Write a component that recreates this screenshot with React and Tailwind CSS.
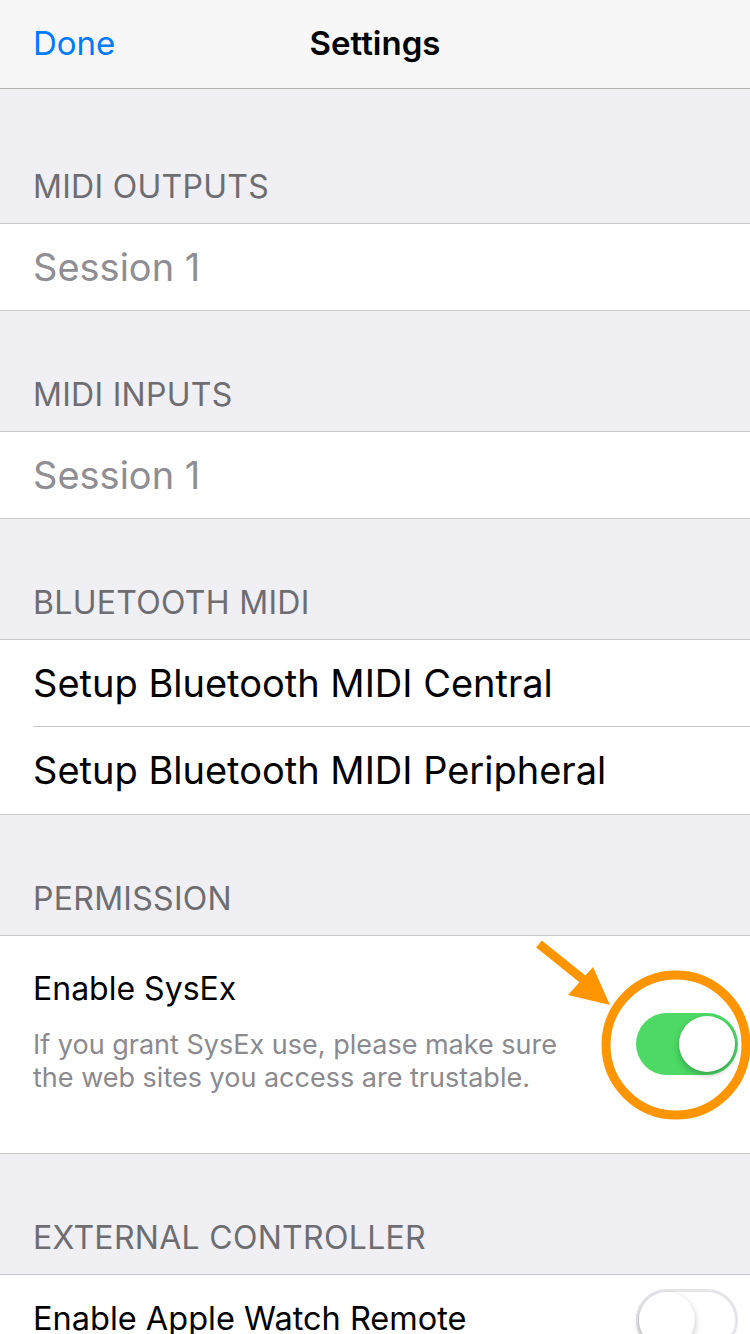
import { useState } from 'react';

function Header({ title }) {
    return (
        <div className="h-[121px] flex items-end px-[33px] pb-[20px] border-b border-[#c8c7cc]">
            <span className="text-[32px] leading-none tracking-[0.3px] text-[#6d6d72]">{title}</span>
        </div>
    );
}

function Toggle({ on }) {
    return (
        <div
            className={
                on
                    ? 'w-[102px] h-[62px] rounded-full bg-[#4cd964] flex items-center justify-end p-[3px]'
                    : 'w-[102px] h-[62px] rounded-full bg-white border-[3px] border-[#e5e5ea] flex items-center justify-start'
            }
        >
            <div className="w-[56px] h-[56px] rounded-full bg-white shadow-[0_3px_6px_rgba(0,0,0,0.25)]" />
        </div>
    );
}

export default function App() {
    const [sysex] = useState(true);

    return (
        <div className="relative w-[750px] h-[1334px] overflow-hidden bg-[#efeff4] font-['Inter','Liberation_Sans',sans-serif]">
            {/* nav */}
            <div className="relative h-[89px] bg-[#f7f7f7] border-b border-[#b2b2b2] flex items-center justify-center">
                <span className="absolute left-[33px] top-[27px] text-[33px] leading-none text-[#007aff]">Done</span>
                <span className="text-[33px] leading-none font-semibold text-black -mt-[2px]">Settings</span>
            </div>

            <div className="h-[14px]" />
            <Header title="MIDI OUTPUTS" />
            <div className="h-[87px] bg-white border-b border-[#c8c7cc] flex items-center px-[33px]">
                <span className="text-[38px] text-[#8e8e93]">Session 1</span>
            </div>

            <Header title="MIDI INPUTS" />
            <div className="h-[87px] bg-white border-b border-[#c8c7cc] flex items-center px-[33px]">
                <span className="text-[38px] text-[#8e8e93]">Session 1</span>
            </div>

            <Header title="BLUETOOTH MIDI" />
            <div className="bg-white border-b border-[#c8c7cc] pl-[33px]">
                <div className="h-[87px] border-b border-[#c8c7cc] flex items-center">
                    <span className="text-[38px] text-black">Setup Bluetooth MIDI Central</span>
                </div>
                <div className="h-[87px] flex items-center">
                    <span className="text-[38px] text-black">Setup Bluetooth MIDI Peripheral</span>
                </div>
            </div>

            <Header title="PERMISSION" />
            <div className="h-[218px] bg-white border-b border-[#c8c7cc] flex items-start px-[33px] pt-[34px]">
                <div className="flex-1">
                    <div className="text-[32px] leading-[38px] text-black">Enable SysEx</div>
                    <div className="mt-[20px] text-[27px] leading-[33px] text-[#8a8a8f]">
                        If you grant SysEx use, please make sure<br />
                        the web sites you access are trustable.
                    </div>
                </div>
                <div className="mt-[43px] -mr-[21px]">
                    <Toggle on={sysex} />
                </div>
            </div>

            <Header title="EXTERNAL CONTROLLER" />
            <div className="h-[90px] bg-white flex items-start px-[33px] pt-[14px]">
                <span className="flex-1 text-[32.5px] leading-none pt-[14px] text-black">Enable Apple Watch Remote</span>
                <div className="-mr-[21px]">
                    <Toggle on={false} />
                </div>
            </div>

            {/* annotation */}
            <svg className="absolute left-0 top-0 pointer-events-none" width="750" height="1334" viewBox="0 0 750 1334">
                <circle cx="676" cy="1045" r="70" fill="none" stroke="#ff9500" strokeWidth="9" />
                <line x1="539" y1="944" x2="590" y2="985" stroke="#ff9500" strokeWidth="9" />
                <polygon points="610,1005 568,995 593,967" fill="#ff9500" />
            </svg>
        </div>
    );
}
